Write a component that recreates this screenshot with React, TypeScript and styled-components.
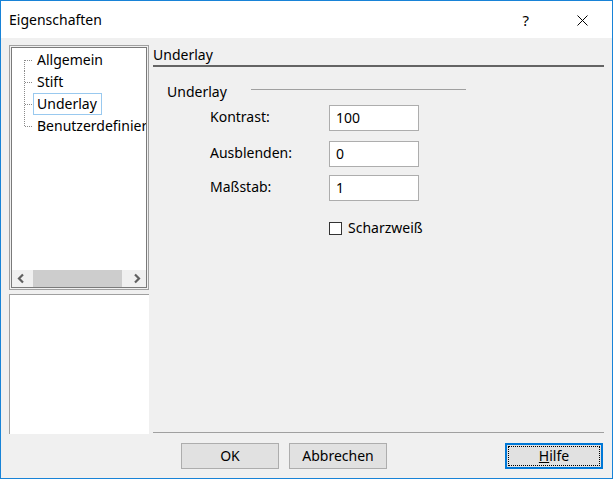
import { FC } from 'react';
import styled, { createGlobalStyle } from 'styled-components';

const GlobalStyle = createGlobalStyle`
  html, body {
    margin: 0;
    padding: 0;
    background: #f0f0f0;
  }
  * {
    box-sizing: border-box;
  }
`;

const treeItems = ['Allgemein', 'Stift', 'Underlay', 'Benutzerdefinier'];

const fields = [
  { label: 'Kontrast:', value: '100', top: 3 },
  { label: 'Ausblenden:', value: '0', top: 10 },
  { label: 'Maßstab:', value: '1', top: 8 },
];

const TreeConnector: FC<{ first: boolean; last: boolean }> = ({ first, last }) => (
  <ConnectorSvg width="9" height="22" viewBox="0 0 9 22">
    <line
      x1="0.5"
      y1={first ? 11 : 0}
      x2="0.5"
      y2={last ? 11.5 : 22}
      stroke="#8a8a8a"
      strokeDasharray="1 1"
    />
    <line x1="1" y1="11.5" x2="9" y2="11.5" stroke="#8a8a8a" strokeDasharray="1 1" />
  </ConnectorSvg>
);

const Chevron: FC<{ dir: 'left' | 'right' }> = ({ dir }) => (
  <svg width="17" height="17" viewBox="0 0 17 17">
    <path
      d={dir === 'left' ? 'M11 4.5 L7 8.5 L11 12.5' : 'M6 4.5 L10 8.5 L6 12.5'}
      fill="none"
      stroke="#606060"
      strokeWidth="2.2"
    />
  </svg>
);

const CloseIcon: FC = () => (
  <svg width="11" height="11" viewBox="0 0 11 11">
    <path d="M0.5 0.5 L10.5 10.5 M10.5 0.5 L0.5 10.5" stroke="#000" strokeWidth="1" />
  </svg>
);

const App: FC = () => {
  return (
    <>
      <GlobalStyle />
      <Window>
        <TitleBar>
          <Title>Eigenschaften</Title>
          <HelpGlyph>?</HelpGlyph>
          <CloseButton>
            <CloseIcon />
          </CloseButton>
        </TitleBar>

        <Body>
          <LeftColumn>
            <TreeFrame>
              <TreeInner>
                <TreeList>
                  {treeItems.map((item, i) => (
                    <TreeRow key={item}>
                      <TreeConnector first={i === 0} last={i === treeItems.length - 1} />
                      <TreeLabel $selected={item === 'Underlay'}>{item}</TreeLabel>
                    </TreeRow>
                  ))}
                </TreeList>
                <HScrollbar>
                  <ScrollButton>
                    <Chevron dir="left" />
                  </ScrollButton>
                  <ScrollTrack>
                    <ScrollThumb />
                  </ScrollTrack>
                  <ScrollButton>
                    <Chevron dir="right" />
                  </ScrollButton>
                </HScrollbar>
              </TreeInner>
            </TreeFrame>
            <InfoBox />
          </LeftColumn>

          <RightColumn>
            <PageHeader>Underlay</PageHeader>
            <GroupHead>
              <GroupTitle>Underlay</GroupTitle>
              <GroupLine />
            </GroupHead>
            {fields.map(f => (
              <FieldRow key={f.label} $top={f.top}>
                <FieldLabel>{f.label}</FieldLabel>
                <TextBox>{f.value}</TextBox>
              </FieldRow>
            ))}
            <CheckRow>
              <CheckBox />
              <CheckLabel>Scharzweiß</CheckLabel>
            </CheckRow>
            <Spacer />
            <Separator />
          </RightColumn>
        </Body>

        <ButtonRow>
          <DialogButton>OK</DialogButton>
          <DialogButton>Abbrechen</DialogButton>
          <HelpButton>
            <FocusRing>
              <u>H</u>ilfe
            </FocusRing>
          </HelpButton>
        </ButtonRow>
      </Window>
    </>
  );
};

export default App;

const Window = styled.div`
  width: 613px;
  height: 479px;
  border: 1px solid #1883d7;
  background: #f0f0f0;
  display: flex;
  flex-direction: column;
  font-family: 'Noto Sans', 'Liberation Sans', sans-serif;
  font-size: 14px;
  color: #000;
  overflow: hidden;
`;

const TitleBar = styled.div`
  height: 37px;
  flex: none;
  background: #fff;
  display: flex;
  align-items: center;
  padding-left: 8px;
  padding-right: 24px;
`;

const Title = styled.div`
  flex: 1;
  font-size: 14px;
  line-height: 20px;
  margin-top: 1px;
`;

const HelpGlyph = styled.div`
  font-size: 15px;
  line-height: 20px;
  margin-right: 48px;
  margin-top: 1px;
`;

const CloseButton = styled.div`
  display: flex;
  align-items: center;
  margin-top: 1px;
`;

const Body = styled.div`
  flex: none;
  display: flex;
  padding: 7px 8px 0 8px;
`;

const LeftColumn = styled.div`
  width: 140px;
  display: flex;
  flex-direction: column;
  gap: 4px;
`;

const TreeFrame = styled.div`
  height: 245px;
  border: 1px solid #a0a0a0;
  padding: 1px;
  background: #f0f0f0;
  display: flex;
`;

const TreeInner = styled.div`
  flex: 1;
  border: 1px solid #7a7a7a;
  background: #fff;
  display: flex;
  flex-direction: column;
  min-width: 0;
`;

const TreeList = styled.div`
  flex: 1;
  padding: 1px 0 0 12px;
  overflow: hidden;
`;

const TreeRow = styled.div`
  height: 22px;
  display: flex;
  align-items: stretch;
`;

const ConnectorSvg = styled.svg`
  flex: none;
`;

const TreeLabel = styled.div<{ $selected?: boolean }>`
  flex: none;
  border: 1px solid ${p => (p.$selected ? '#99c9ef' : 'transparent')};
  padding: 0 4px 0 3px;
  line-height: 20px;
  white-space: nowrap;
`;

const HScrollbar = styled.div`
  height: 17px;
  flex: none;
  display: flex;
  background: #f0f0f0;
`;

const ScrollButton = styled.div`
  width: 17px;
  height: 17px;
  flex: none;
  display: flex;
`;

const ScrollTrack = styled.div`
  flex: 1;
  padding-left: 4px;
  display: flex;
`;

const ScrollThumb = styled.div`
  width: 89px;
  background: #cdcdcd;
`;

const InfoBox = styled.div`
  height: 140px;
  background: #fff;
  border-top: 1px solid #a0a0a0;
  border-left: 1px solid #a0a0a0;
`;

const RightColumn = styled.div`
  width: 451px;
  margin-left: 4px;
  display: flex;
  flex-direction: column;
`;

const PageHeader = styled.div`
  line-height: 20px;
  border-bottom: 2px solid #646464;
`;

const GroupHead = styled.div`
  margin-top: 15px;
  height: 20px;
  padding-left: 14px;
  display: grid;
  grid-template-columns: 84px 215px;
`;

const GroupTitle = styled.div`
  line-height: 20px;
`;

const GroupLine = styled.div`
  margin-top: 7px;
  height: 1px;
  background: #a0a0a0;
`;

const FieldRow = styled.div<{ $top: number }>`
  margin-top: ${p => p.$top}px;
  padding-left: 57px;
  display: grid;
  grid-template-columns: 119px 90px;
  align-items: center;
`;

const FieldLabel = styled.div`
  line-height: 20px;
  margin-top: -2px;
`;

const TextBox = styled.div`
  height: 26px;
  border: 1px solid #adadad;
  background: #fff;
  padding-left: 6px;
  line-height: 24px;
`;

const CheckRow = styled.div`
  margin-top: 17px;
  padding-left: 176px;
  display: flex;
  align-items: center;
`;

const CheckBox = styled.div`
  width: 13px;
  height: 13px;
  border: 1px solid #333;
  background: #fff;
`;

const CheckLabel = styled.div`
  margin-left: 6px;
  line-height: 20px;
`;

const Spacer = styled.div`
  flex: 1;
`;

const Separator = styled.div`
  height: 1px;
  background: #a0a0a0;
  margin-bottom: 1px;
`;

const ButtonRow = styled.div`
  flex: none;
  margin-top: 9px;
  padding: 0 9px 0 180px;
  display: flex;
  gap: 10px;
`;

const DialogButton = styled.div`
  width: 98px;
  height: 26px;
  background: #e1e1e1;
  border: 1px solid #adadad;
  display: flex;
  align-items: center;
  justify-content: center;
  line-height: 20px;
`;

const HelpButton = styled(DialogButton)`
  margin-left: auto;
  border: 2px solid #0078d7;
  padding: 1px;
`;

const FocusRing = styled.div`
  width: 100%;
  height: 100%;
  border: 1px dotted #000;
  display: flex;
  align-items: center;
  justify-content: center;
  line-height: 18px;
`;
